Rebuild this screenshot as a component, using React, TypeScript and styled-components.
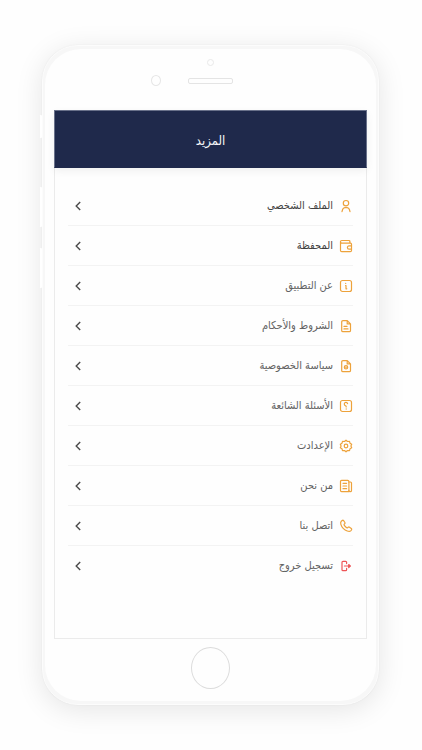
import React from "react";
import styled, { createGlobalStyle } from "styled-components";

const GlobalStyle = createGlobalStyle`
  *, *::before, *::after { box-sizing: border-box; }
  body {
    margin: 0;
    background: #fefefe;
    font-family: "DejaVu Sans Condensed", "DejaVu Sans", "Noto Sans", sans-serif;
  }
`;

const Stage = styled.main`
  display: flex;
  flex-direction: column;
  padding: 45px 43px 40px 42px;
`;

const Phone = styled.div`
  position: relative;
  display: flex;
  flex-direction: column;
  padding: 3px 2px;
  border: 1px solid #fcfcfc;
  border-radius: 36px;
  background: #f7f7f7;
  box-shadow: 0 5px 28px rgba(0, 0, 0, 0.1), 0 0 2px rgba(0, 0, 0, 0.05);
`;

const SideKey = styled.span<{ $top: number; $size: number }>`
  position: absolute;
  left: -4px;
  top: ${(p) => p.$top}px;
  width: 3px;
  height: ${(p) => p.$size}px;
  border-left: 1px solid #f3f3f3;
  border-radius: 1px;
  background: #fff;
`;

const Face = styled.div`
  display: flex;
  flex-direction: column;
  padding: 9px;
  border-radius: 36px;
  background: #fefefe;
`;

const Bezel = styled.div`
  display: flex;
  flex-direction: column;
  align-items: center;
  gap: 9px;
  height: 52px;
  padding-top: 1px;
`;

const Camera = styled.span`
  width: 7px;
  height: 7px;
  border: 1px solid #e9e9e9;
  border-radius: 50%;
`;

const SensorRow = styled.div`
  display: grid;
  grid-template-columns: 1fr 45px 1fr;
  align-items: center;
  align-self: stretch;
  direction: ltr;
`;

const Sensor = styled.span`
  justify-self: end;
  width: 10px;
  height: 11px;
  margin-right: 27px;
  border: 1px solid #e6e6e6;
  border-radius: 50%;
`;

const Speaker = styled.span`
  height: 6px;
  border: 1px solid #e4e4e4;
  border-radius: 2px;
`;

const Screen = styled.section`
  display: flex;
  flex-direction: column;
  min-height: 529px;
  border: 1px solid #ebebeb;
  background: #fefefe;
`;

const Header = styled.header`
  display: flex;
  align-items: center;
  justify-content: center;
  height: 58px;
  margin: -1px -1px 0;
  padding-top: 4px;
  border: 1px solid #69718a;
  border-bottom-color: #1f294b;
  background: #1f294b;
  box-shadow: 0 3px 8px rgba(0, 0, 0, 0.06);
`;

const Title = styled.h1`
  margin: 0;
  color: #f4f5f8;
  font-size: 13px;
  font-weight: 400;
  line-height: 20px;
`;

const Menu = styled.ul`
  margin: 0;
  padding: 18px 13px;
  list-style: none;
`;

const MenuItem = styled.li`
  border-bottom: 1px solid #f3f3f3;

  &:last-child { border-bottom: 0; }
`;

const MenuLink = styled.a<{ $strong?: boolean }>`
  display: flex;
  align-items: center;
  gap: 6px;
  height: 39px;
  padding-left: 7px;
  color: ${(p) => (p.$strong ? "#3f3f3f" : "#626262")};
  font-size: 11px;
  line-height: 18px;
  text-decoration: none;
`;

const Label = styled.span`
  flex: 1;
  white-space: nowrap;
`;

const Icon = styled.svg<{ $danger?: boolean }>`
  flex: none;
  width: 14px;
  height: 14px;
  fill: none;
  stroke: ${(p) => (p.$danger ? "#ee5557" : "#eda23b")};
  stroke-width: 1.2;
  stroke-linecap: round;
  stroke-linejoin: round;
`;

const Chevron = styled.svg`
  flex: none;
  width: 6px;
  height: 10px;
  fill: none;
  stroke: #4a4a4a;
  stroke-width: 1.4;
`;

const HomeRow = styled.div`
  display: flex;
  justify-content: center;
  padding: 8px 0 3px;
`;

const HomeButton = styled.button`
  width: 39px;
  height: 42px;
  padding: 0;
  border: 1px solid #dcdcdc;
  border-radius: 50%;
  background: #fefefe;
`;

type Item = { label: string; icon: React.ReactNode; strong?: boolean; danger?: boolean };

const docOutline = (
  <path d="M4 1.6h4.3l3.2 3.2v6.6a1.3 1.3 0 0 1-1.3 1.3H4a1.3 1.3 0 0 1-1.3-1.3V2.9A1.3 1.3 0 0 1 4 1.6zM8.2 1.8v3.1h3.1" />
);

const items: Item[] = [
  {
    label: "الملف الشخصي",
    strong: true,
    icon: (
      <>
        <circle cx="7" cy="4.2" r="2.7" />
        <path d="M3 12.7l.6-2.2a2.6 2.6 0 0 1 2.200-1.800h2.400a2.600 2.600 0 0 1 2.200 1.800l.6 2.200" />
      </>
    ),
  },
  {
    label: "المحفظة",
    strong: true,
    icon: (
      <>
        <path d="M10.9 4.2V2.5a1 1 0 0 0-1-1H2.800a1.300 1.300 0 0 0 0 2.700h8.700a1 1 0 0 1 1 1v6.300a1.200 1.200 0 0 1-1.200 1.200H2.700a1.200 1.200 0 0 1-1.200-1.200V3" />
        <path d="M12.5 6.9H10a1.600 1.600 0 0 0 0 3.200h2.500" />
      </>
    ),
  },
  {
    label: "عن التطبيق",
    icon: (
      <>
        <rect x="1.5" y="1.5" width="11" height="11" rx="2" />
        <path d="M6.5 6.500H7v3.300M7 9.800h.8M6.700 4.400v.1" />
      </>
    ),
  },
  {
    label: "الشروط والأحكام",
    icon: (
      <>
        {docOutline}
        <path d="M5 7.400h3M5 9.900h4" />
      </>
    ),
  },
  {
    label: "سياسة الخصوصية",
    icon: (
      <>
        {docOutline}
        <circle cx="7" cy="8.300" r="1.700" />
        <circle cx="7" cy="8.300" r="0.300" />
      </>
    ),
  },
  {
    label: "الأسئلة الشائعة",
    icon: (
      <>
        <rect x="1.5" y="1.5" width="11" height="11" rx="2" />
        <path d="M8.600 4.700a1.700 1.700 0 1 0-1.900 2.100c.5.100.5.500.5 1.200M7.200 9.900v.2" />
      </>
    ),
  },
  {
    label: "الإعدادت",
    icon: (
      <>
        <path d="M7 1.200l1.500 1.300 2-.2.500 1.900 1.700 1-.8 1.800.8 1.800-1.700 1-.5 1.900-2-.2L7 12.800l-1.500-1.300-2 .2L3 9.800l-1.700-1L2.100 7l-.8-1.800 1.700-1 .5-1.900 2 .2z" />
        <circle cx="7" cy="7" r="1.800" />
      </>
    ),
  },
  {
    label: "من نحن",
    icon: (
      <>
        <path d="M9.900 12.600H2.600a1.100 1.100 0 0 1-1.100-1.100v-9a1.100 1.100 0 0 1 1.100-1.100h6.200a1.100 1.100 0 0 1 1.100 1.100z" />
        <path d="M9.900 3h1.600a1 1 0 0 1 1 1v7.400a1.300 1.300 0 0 1-2.600 0M4 4.300h3.600M4 7h3.600M4 9.700h3.600" />
      </>
    ),
  },
  {
    label: "اتصل بنا",
    icon: (
      <path d="M2.300 2.200l.9-.7a1 1 0 0 1 1.400.2l1.300 1.800a1 1 0 0 1-.2 1.300l-.7.600c-.2.900 2.400 3.600 3.500 3.500l.7-.6a1 1 0 0 1 1.300-.1l1.800 1.300a1 1 0 0 1 .2 1.400l-.8.900c-1.500 1.600-5.200-.2-7.500-2.500S.900 3.500 2.300 2.200z" />
    ),
  },
  {
    label: "تسجيل خروج",
    danger: true,
    icon: (
      <>
        <path d="M7.600 4.600V3.300a1 1 0 0 0-1-1H4a1 1 0 0 0-1 1v7.400a1 1 0 0 0 1 1h2.600a1 1 0 0 0 1-1V9.400" />
        <path d="M5.400 7h5.600" />
        <path d="M9.700 5.500L11.300 7 9.700 8.500z" />
      </>
    ),
  },
];

export default function App() {
  return (
    <>
      <GlobalStyle />
      <Stage lang="ar" dir="rtl">
        <Phone>
          <SideKey $top={69} $size={23} />
          <SideKey $top={141} $size={40} />
          <SideKey $top={202} $size={40} />
          <Face>
            <Bezel>
              <Camera />
              <SensorRow>
                <Sensor />
                <Speaker />
              </SensorRow>
            </Bezel>
            <Screen>
              <Header>
                <Title>المزيد</Title>
              </Header>
              <nav>
                <Menu>
                  {items.map((item) => (
                    <MenuItem key={item.label}>
                      <MenuLink href="#" $strong={item.strong}>
                        <Icon viewBox="0 0 14 14" $danger={item.danger} aria-hidden="true">
                          {item.icon}
                        </Icon>
                        <Label>{item.label}</Label>
                        <Chevron viewBox="0 0 6 10" aria-hidden="true">
                          <path d="M5.200 1L1.200 5l4 4" />
                        </Chevron>
                      </MenuLink>
                    </MenuItem>
                  ))}
                </Menu>
              </nav>
            </Screen>
            <HomeRow>
              <HomeButton type="button" aria-label="الرئيسية" />
            </HomeRow>
          </Face>
        </Phone>
      </Stage>
    </>
  );
}
